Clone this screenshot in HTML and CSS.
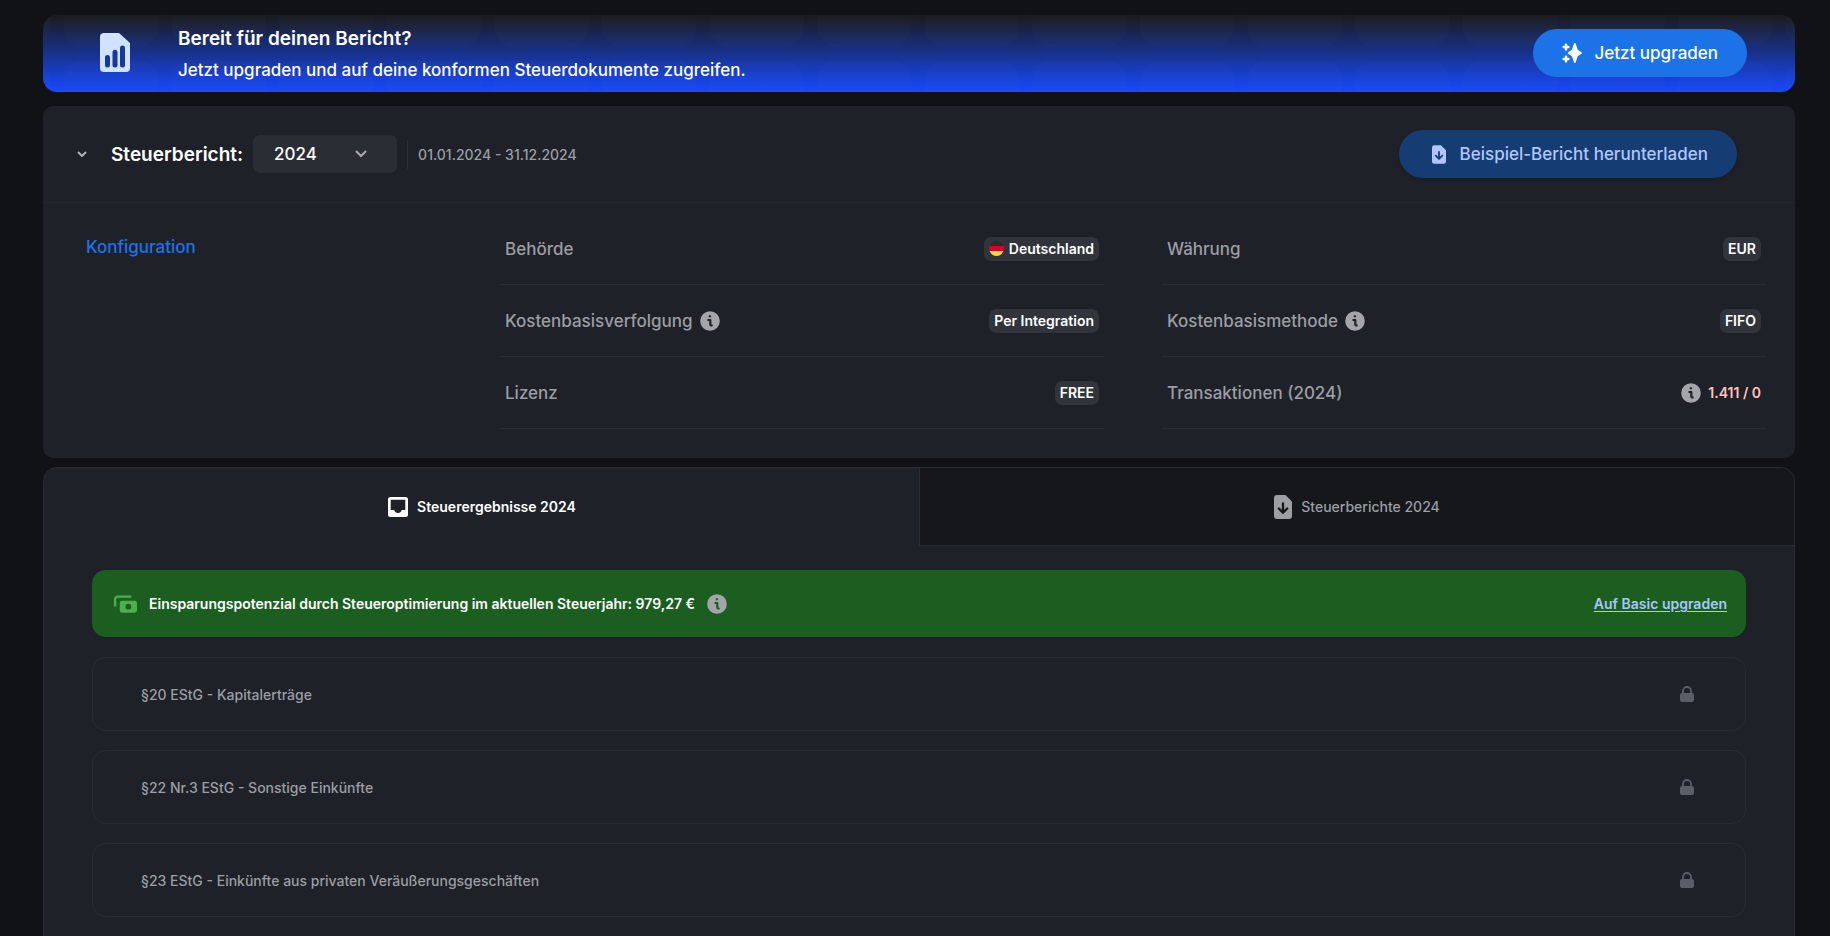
FILE: index.html
```html
<!DOCTYPE html>
<html lang="de">
<head>
<meta charset="utf-8">
<meta name="viewport" content="width=device-width, initial-scale=1">
<title>Steuerbericht 2024</title>
<link rel="stylesheet" href="styles.css">
</head>
<body>
<svg class="sprite" aria-hidden="true">
  <symbol id="info" viewBox="0 0 20 20">
    <circle cx="10" cy="10" r="9.8"/>
    <g class="knockout">
      <circle cx="9.900" cy="5.300" r=".8"/>
      <path d="M8.300 9h2v4q0 1.500 1.500 1.500" fill="none" stroke-width="2.200" stroke-linecap="round" stroke-linejoin="round"/>
    </g>
  </symbol>
  <symbol id="lock" viewBox="0 0 14 16">
    <rect x="0" y="7" width="14" height="9" rx="2"/>
    <path d="M3 8V5a4 4 0 0 1 8 0v3" fill="none" stroke="currentColor" stroke-width="1.8"/>
  </symbol>
  <symbol id="file-down" viewBox="0 0 18 24">
    <path d="M3 0h8.500l6.500 6.500V21a3 3 0 0 1-3 3H3a3 3 0 0 1-3-3V3a3 3 0 0 1 3-3z"/>
    <path class="knockout arrow" d="M9 8.500v9M4.800 13.500l4.200 4.200 4.200-4.200" fill="none" stroke-width="2.300" stroke-linecap="round" stroke-linejoin="round"/>
  </symbol>
</svg>
<main class="page">
  <section class="banner">
    <svg class="banner-tiles" aria-hidden="true">
      <defs>
        <pattern id="tiles" x="21" y="-62" width="107.600" height="107.600" patternUnits="userSpaceOnUse">
          <rect width="94" height="94" rx="20" fill="#fff" fill-opacity=".012"/>
        </pattern>
      </defs>
      <rect width="100%" height="100%" fill="url(#tiles)"/>
    </svg>
    <svg class="banner-icon" viewBox="0 0 30 39" aria-hidden="true">
      <path fill="#cfe2ff" d="M4 0h15L30 10v25a4 4 0 0 1-4 4H4a4 4 0 0 1-4-4V4a4 4 0 0 1 4-4z"/>
      <path stroke="#17379f" stroke-width="5" stroke-linecap="round" d="M7.500 24.500V32M15 19.300V32M22.500 15V32"/>
    </svg>
    <div class="banner-text">
      <h1>Bereit für deinen Bericht?</h1>
      <p>Jetzt upgraden und auf deine konformen Steuerdokumente zugreifen.</p>
    </div>
    <button class="btn btn-primary" type="button">
      <svg class="ic-spark" viewBox="0 0 20 20" aria-hidden="true"><path fill="currentColor" d="M12.800 0q.6 0 .8.600l2.100 6.200 3.700 2.400q1.200.800 0 1.600l-3.700 2.400-2.100 6.200q-.8 1.200-1.600 0l-2.100-6.200-3.700-2.400q-1.200-.800 0-1.600l3.700-2.400L12 .6q.2-.6.800-.6z"/><path d="M4 1.600v4.800M1.600 4h4.800M4 13.600v4.800M1.600 16h4.800" stroke="currentColor" stroke-width="2.400" stroke-linecap="round"/></svg>
      Jetzt upgraden
    </button>
  </section>

  <section class="card">
    <header class="card-head">
      <button class="collapse" type="button" aria-label="Einklappen"><svg width="10" height="6" viewBox="0 0 10 6"><path d="M1 1l4 4 4-4"/></svg></button>
      <label class="head-title" for="year">Steuerbericht:</label>
      <span class="select-wrap">
        <select id="year"><option>2024</option><option>2023</option></select>
        <svg class="caret" width="12" height="8" viewBox="0 0 12 8" aria-hidden="true"><path d="M1 1l5 5 5-5"/></svg>
      </span>
      <span class="period">01.01.2024 - 31.12.2024</span>
      <button class="btn btn-tonal" type="button"><svg class="ic-file" aria-hidden="true"><use href="#file-down"/></svg>Beispiel-Bericht herunterladen</button>
    </header>
    <div class="config">
      <h2>Konfiguration</h2>
      <dl class="config-list">
        <div class="row"><dt>Behörde</dt><dd class="chip"><svg class="flag" viewBox="0 0 15 15" aria-hidden="true"><clipPath id="disc"><circle cx="7.500" cy="7.500" r="7.500"/></clipPath><g clip-path="url(#disc)"><path fill="#2b2b2c" d="M0 0h15v5H0z"/><path fill="#d80027" d="M0 5h15v5H0z"/><path fill="#ffda44" d="M0 10h15v5H0z"/></g></svg>Deutschland</dd></div>
        <div class="row"><dt>Währung</dt><dd class="chip">EUR</dd></div>
        <div class="row"><dt>Kostenbasisverfolgung <svg class="info"><use href="#info"/></svg></dt><dd class="chip">Per Integration</dd></div>
        <div class="row"><dt>Kostenbasismethode <svg class="info"><use href="#info"/></svg></dt><dd class="chip">FIFO</dd></div>
        <div class="row"><dt>Lizenz</dt><dd class="chip">FREE</dd></div>
        <div class="row"><dt>Transaktionen (2024)</dt><dd class="usage"><svg class="info"><use href="#info"/></svg>1.411 / 0</dd></div>
      </dl>
    </div>
  </section>

  <section class="panel">
    <div class="tabs" role="tablist">
      <button class="tab active" type="button" role="tab" aria-selected="true"><svg class="ic-inbox" viewBox="0 0 20 20" aria-hidden="true"><path fill="currentColor" fill-rule="evenodd" d="M2.500 0h15A2.500 2.500 0 0 1 20 2.500v15a2.500 2.500 0 0 1-2.500 2.500h-15A2.500 2.500 0 0 1 0 17.500v-15A2.500 2.500 0 0 1 2.500 0zM2.700 2.700V13h3.500q.800 3 3.800 3t3.800-3H17.300V2.700z"/></svg>Steuerergebnisse 2024</button>
      <button class="tab" type="button" role="tab" aria-selected="false"><svg class="ic-report" aria-hidden="true"><use href="#file-down"/></svg>Steuerberichte 2024</button>
    </div>
    <div class="panel-body">
      <div class="savings">
        <svg class="ic-cash" viewBox="0 0 24 18" aria-hidden="true"><path d="M1.200 11.500V4a2.800 2.800 0 0 1 2.800-2.800h14" fill="none" stroke="currentColor" stroke-width="2.400"/><path fill="currentColor" fill-rule="evenodd" d="M8.500 5.500h13A2.500 2.500 0 0 1 24 8v7.500a2.500 2.500 0 0 1-2.500 2.500h-13A2.500 2.500 0 0 1 6 15.500V8a2.500 2.500 0 0 1 2.500-2.500zM15 8.800a3 3 0 1 0 0 6a3 3 0 0 0 0-6z"/></svg>
        <span>Einsparungspotenzial durch Steueroptimierung im aktuellen Steuerjahr: 979,27 €</span>
        <svg class="info"><use href="#info"/></svg>
        <a href="#">Auf Basic upgraden</a>
      </div>
      <div class="entry"><span>§20 EStG - Kapitalerträge</span><svg class="lock"><use href="#lock"/></svg></div>
      <div class="entry"><span>§22 Nr.3 EStG - Sonstige Einkünfte</span><svg class="lock"><use href="#lock"/></svg></div>
      <div class="entry"><span>§23 EStG - Einkünfte aus privaten Veräußerungsgeschäften</span><svg class="lock"><use href="#lock"/></svg></div>
    </div>
  </section>
</main>
</body>
</html>
```
FILE: styles.css
```css
* { box-sizing: border-box; }
:root {
  --bg: #111216;
  --surface: #1e2128;
  --line: #292c33;
  --muted: #9b9ea3;
}
html { background: var(--bg); }
body {
  margin: 0;
  height: 100vh;
  overflow: hidden;
  font-family: Inter, "Liberation Sans", sans-serif;
  font-size: 14px;
  font-weight: 500;
  color: #fff;
}
h1, h2, p, dl, dd { margin: 0; }
button, select { font: inherit; color: inherit; border: 0; }
button { cursor: pointer; }
svg { flex: none; fill: currentColor; }
.sprite { position: absolute; width: 0; height: 0; }
.page {
  display: flex;
  flex-direction: column;
  height: 100%;
  padding: 15px 35px 0 43px;
}

.banner {
  position: relative;
  display: flex;
  align-items: flex-start;
  min-height: 77px;
  padding: 0 48px 0 57px;
  border-radius: 14px;
  overflow: hidden;
  background: linear-gradient(#1a1a1b, #1749ff);
}
.banner-tiles { position: absolute; inset: 0; width: 100%; height: 100%; }
.banner-icon { width: 30px; height: 39px; margin: 18px 48px 0 0; position: relative; }
.banner-text { position: relative; padding-top: 8px; }
.banner h1 { font-size: 19px; line-height: 32px; font-weight: 600; }
.banner p { font-size: 17px; line-height: 30px; }
.banner .btn { margin-top: 14px; }

.btn {
  position: relative;
  display: flex;
  align-items: center;
  gap: 12px;
  height: 48px;
  margin-left: auto;
  padding: 0 29px;
  border-radius: 24px;
  font-size: 17px;
}
.btn-primary { background: #1c73e8; }
.btn-tonal { background: #153d74; color: #afc6ff; gap: 14px; padding: 0 29px 0 33px; box-shadow: 0 1px 4px rgb(0 0 0 / 20%); }
.ic-spark { width: 20px; height: 20px; }
.ic-file { width: 14px; height: 19px; }
.ic-report { width: 18px; height: 24px; }

.card { margin-top: 14px; border-radius: 10px; background: var(--surface); }
.card-head {
  display: flex;
  align-items: center;
  height: 97px;
  padding: 0 58px 0 29px;
  border-bottom: 1px solid #23262d;
}
.collapse { display: grid; place-items: center; width: 20px; height: 24px; padding: 0; background: none; color: #b0b2b6; }
.collapse path, .caret path { fill: none; stroke: currentColor; stroke-width: 2; }
.head-title { margin-left: 19px; font-size: 19px; font-weight: 600; }
.select-wrap { position: relative; margin-left: 10px; }
.select-wrap select {
  display: block;
  appearance: none;
  width: 144px;
  height: 38px;
  padding: 0 21px;
  border-radius: 7px;
  background: #2a2d34;
  font-size: 17px;
}
.caret { position: absolute; right: 30px; top: 15px; color: #a9abaf; pointer-events: none; }
.period { margin-left: 10px; padding-left: 10px; border-left: 1px solid #2c2f36; line-height: 29px; color: var(--muted); }

.config { display: grid; grid-template-columns: 457px 1fr; padding: 10px 29px 29px 0; }
.config h2 { padding: 24px 0 0 43px; font-size: 17px; line-height: 20px; font-weight: 500; color: #1c73e8; }
.config-list { display: grid; grid-template-columns: 1fr 1fr; column-gap: 58px; color: var(--muted); }
.row { display: flex; align-items: center; justify-content: space-between; height: 72px; padding: 0 5px; border-bottom: 1px solid var(--line); }
.row dt { display: flex; align-items: center; gap: 7px; font-size: 17px; }
.info { width: 20px; height: 20px; color: #a3a5aa; --hole: var(--surface); }
.knockout { fill: var(--hole); stroke: var(--hole); }
.knockout path, .knockout.arrow { fill: none; }
.chip { display: flex; align-items: center; gap: 5px; height: 24px; padding: 0 5px; border-radius: 7px; background: #31343b; color: #fff; font-weight: 600; }
.flag { width: 15px; height: 15px; }
.usage { display: flex; align-items: center; gap: 7px; color: #ffc4bd; font-weight: 600; }

.panel { flex: none; margin-top: 9px; border: 1px solid var(--line); border-radius: 14px; background: var(--surface); overflow: hidden; }
.tabs { display: grid; grid-template-columns: 1fr 1fr; }
.tab { display: flex; align-items: center; justify-content: center; gap: 9px; height: 78px; padding: 0; background: #16171b; color: var(--muted); border-left: 1px solid var(--line); border-bottom: 1px solid var(--line); }
.tab.active { background: none; color: #fff; border-color: transparent; font-weight: 600; }
.ic-inbox { width: 20px; height: 20px; }
.ic-report { --hole: #16171b; }
.ic-file { --hole: #153d74; }
.panel-body { padding: 24px 48px 40px; }
.savings { display: flex; align-items: center; height: 67px; padding: 0 19px 0 22px; border-radius: 14px; background: #1c5e20; font-weight: 600; }
.savings .info { margin-left: 12px; --hole: #1c5e20; }
.ic-cash { width: 23px; height: 18px; margin-right: 12px; color: #4caf50; }
.savings a { margin-left: auto; color: #a8c7fa; text-underline-offset: 2px; }
.entry { display: flex; align-items: center; justify-content: space-between; height: 74px; margin-top: 19px; padding: 0 51px 0 48px; border: 1px solid #282b30; border-radius: 14px; color: var(--muted); }
.savings + .entry { margin-top: 20px; }
.lock { width: 14px; height: 16px; color: #5b5e66; }
```
